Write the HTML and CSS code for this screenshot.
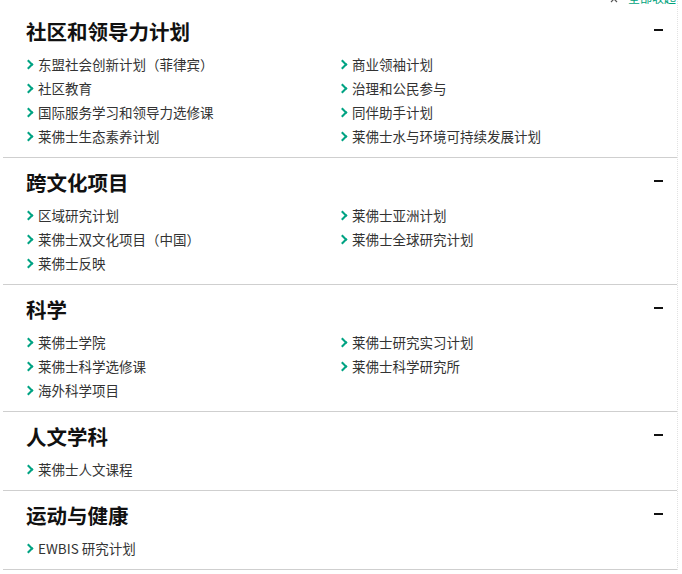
FILE: index.html
```html
<!DOCTYPE html>
<html lang="zh-CN">
<head>
<meta charset="utf-8">
<title>项目</title>
<link rel="stylesheet" href="styles.css">
</head>
<body>
<div class="wrap">
  <div class="topbar">
    <a class="collapse-all" href="#">
      <svg class="collapse-icon" width="8" height="10" viewBox="0 0 8 10"><polyline points="1,4 4,1 7,4" fill="none" stroke="#555" stroke-width="1.2"/><polyline points="1,9 4,6 7,9" fill="none" stroke="#555" stroke-width="1.2"/></svg>
      <span>全部收起</span>
    </a>
  </div>

  <section class="group">
    <div class="group-head"><h2>社区和领导力计划</h2><span class="minus"></span></div>
    <ul class="items">
      <li><span class="chev"></span>东盟社会创新计划（菲律宾）</li>
      <li><span class="chev"></span>商业领袖计划</li>
      <li><span class="chev"></span>社区教育</li>
      <li><span class="chev"></span>治理和公民参与</li>
      <li><span class="chev"></span>国际服务学习和领导力选修课</li>
      <li><span class="chev"></span>同伴助手计划</li>
      <li><span class="chev"></span>莱佛士生态素养计划</li>
      <li><span class="chev"></span>莱佛士水与环境可持续发展计划</li>
    </ul>
  </section>

  <section class="group">
    <div class="group-head"><h2>跨文化项目</h2><span class="minus"></span></div>
    <ul class="items">
      <li><span class="chev"></span>区域研究计划</li>
      <li><span class="chev"></span>莱佛士亚洲计划</li>
      <li><span class="chev"></span>莱佛士双文化项目（中国）</li>
      <li><span class="chev"></span>莱佛士全球研究计划</li>
      <li><span class="chev"></span>莱佛士反映</li>
    </ul>
  </section>

  <section class="group">
    <div class="group-head"><h2>科学</h2><span class="minus"></span></div>
    <ul class="items">
      <li><span class="chev"></span>莱佛士学院</li>
      <li><span class="chev"></span>莱佛士研究实习计划</li>
      <li><span class="chev"></span>莱佛士科学选修课</li>
      <li><span class="chev"></span>莱佛士科学研究所</li>
      <li><span class="chev"></span>海外科学项目</li>
    </ul>
  </section>

  <section class="group">
    <div class="group-head"><h2>人文学科</h2><span class="minus"></span></div>
    <ul class="items">
      <li><span class="chev"></span>莱佛士人文课程</li>
    </ul>
  </section>

  <section class="group">
    <div class="group-head"><h2>运动与健康</h2><span class="minus"></span></div>
    <ul class="items">
      <li><span class="chev"></span>EWBIS 研究计划</li>
    </ul>
  </section>
</div>
</body>
</html>
```

FILE: styles.css
```css
html, body {
  margin: 0;
  padding: 0;
  background: #fff;
}
body {
  font-family: "Noto Sans CJK SC", "Noto Sans", "Liberation Sans", sans-serif;
  color: #333;
  overflow: hidden;
}
.wrap {
  margin-left: 3px;
  width: 675px;
  border-right: 1px dotted #e2e2e2;
  min-height: 574px;
  box-sizing: border-box;
}
.topbar {
  margin-top: -11px;
  height: 18px;
  display: flex;
  justify-content: flex-end;
  padding-right: 1px;
}
.collapse-all {
  display: flex;
  align-items: center;
  gap: 10px;
  color: #00a37c;
  text-decoration: none;
  font-size: 12px;
  line-height: 16px;
}
.group {
  border-bottom: 1px solid #cfcfcf;
  padding: 9px 14px 9px 23px;
}
.group-head {
  display: flex;
  justify-content: space-between;
  align-items: center;
  height: 30px;
  margin-bottom: 6px;
}
.group-head h2 {
  margin: 0;
  font-size: 20.5px;
  line-height: 30px;
  font-weight: 700;
  color: #111;
}
.minus {
  width: 9px;
  height: 2px;
  background: #111;
  margin-top: -2px;
}
.items {
  list-style: none;
  margin: 0;
  padding: 0;
  display: grid;
  grid-template-columns: 314px 1fr;
}
.items li {
  display: flex;
  align-items: center;
  font-size: 13.5px;
  line-height: 24px;
  color: #333;
  white-space: nowrap;
}
.chev {
  width: 5px;
  height: 5px;
  border-right: 2px solid #00a383;
  border-bottom: 2px solid #00a383;
  transform: rotate(-45deg);
  margin: 0 6px 0 -1px;
  flex: none;
}
```
